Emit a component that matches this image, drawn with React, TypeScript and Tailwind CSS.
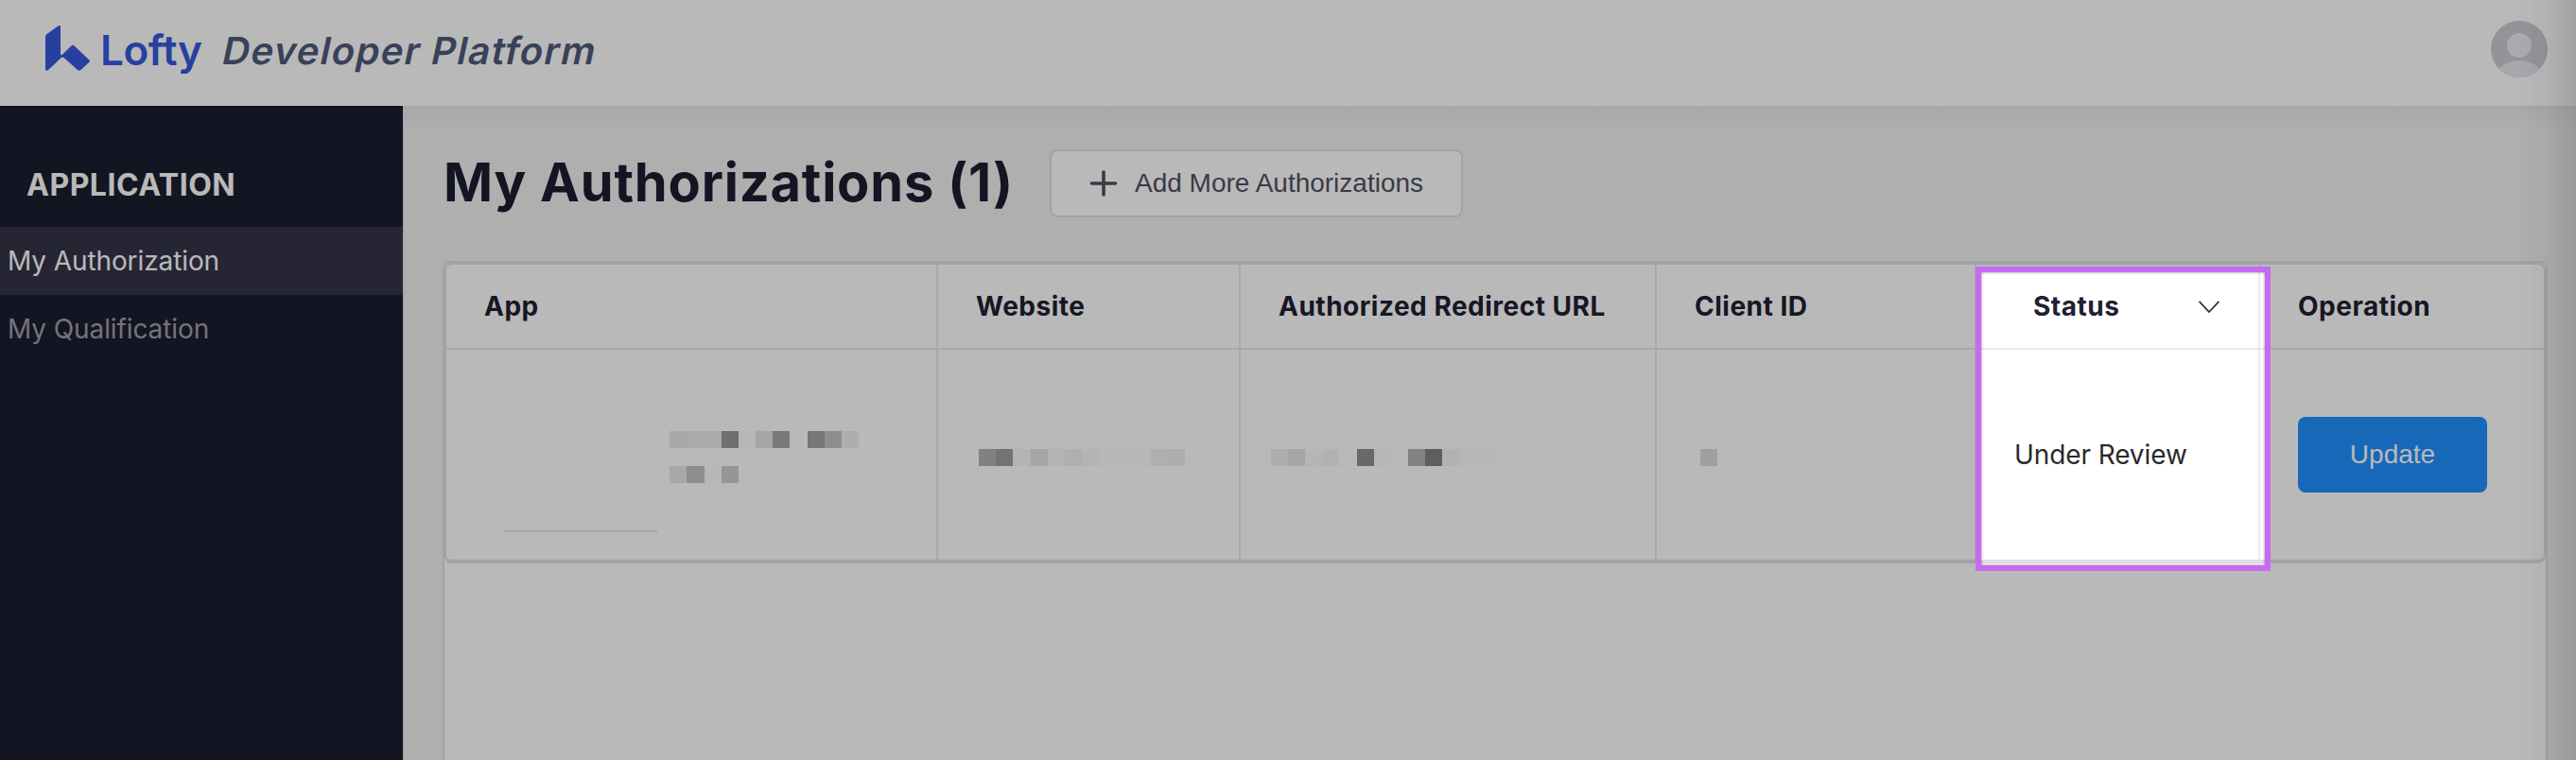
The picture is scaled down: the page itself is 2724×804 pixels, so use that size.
type Pixel = {
  w: number;
  color: string;
};

type NavItem = {
  label: string;
  active: boolean;
};

const NAV_ITEMS: NavItem[] = [
  { label: "My Authorization", active: true },
  { label: "My Qualification", active: false },
];

/**
 * =========================================
 * MASKED VALUES
 * =========================================
 */
const APP_NAME: Pixel[] = [
  { w: 18, color: "#e8e8e8" },
  { w: 37, color: "#ebebeb" },
  { w: 18, color: "#999999" },
  { w: 18, color: "#fdfdfd" },
  { w: 18, color: "#e5e5e5" },
  { w: 18, color: "#a7a7a7" },
  { w: 19, color: "#ffffff" },
  { w: 18, color: "#a5a5a5" },
  { w: 18, color: "#c4c4c4" },
  { w: 18, color: "#f0f0f0" },
];

const APP_NAME_REST: Pixel[] = [
  { w: 18, color: "#e8e8e8" },
  { w: 19, color: "#c4c4c4" },
  { w: 18, color: "#fdfdfd" },
  { w: 18, color: "#cfcfcf" },
];

const WEBSITE: Pixel[] = [
  { w: 18, color: "#b2b2b2" },
  { w: 18, color: "#9f9f9f" },
  { w: 19, color: "#f8f8f8" },
  { w: 18, color: "#e4e4e4" },
  { w: 18, color: "#f8f8f8" },
  { w: 18, color: "#f1f1f1" },
  { w: 18, color: "#f8f8f8" },
  { w: 55, color: "#fdfdfd" },
  { w: 18, color: "#f2f2f2" },
  { w: 18, color: "#efefef" },
];

const REDIRECT_URL: Pixel[] = [
  { w: 18, color: "#efefef" },
  { w: 18, color: "#e4e4e4" },
  { w: 18, color: "#fafafa" },
  { w: 18, color: "#f5f5f5" },
  { w: 19, color: "#fefefe" },
  { w: 18, color: "#919191" },
  { w: 18, color: "#fbfbfb" },
  { w: 18, color: "#fefefe" },
  { w: 18, color: "#b4b4b4" },
  { w: 18, color: "#828282" },
  { w: 19, color: "#f6f6f6" },
  { w: 36, color: "#fdfdfd" },
];

const CLIENT_ID: Pixel[] = [{ w: 18, color: "#dcdcdc" }];

function MaskedText({ pixels }: { pixels: Pixel[] }) {
  return (
    <div className="flex h-[18px]">
      {pixels.map((p, i) => (
        <span
          key={i}
          className="h-full"
          style={{ width: p.w, backgroundColor: p.color }}
        />
      ))}
    </div>
  );
}

function Logo() {
  return (
    <div className="flex items-center whitespace-nowrap">
      <svg width="48" height="52" viewBox="0 0 48 52" className="-mt-[6px]">
        <path
          d="M0 14.5 Q0 13.2 1 12.4 L13.4 3.4 Q16 2 16 4.8 V33.6 L17.4 34.2 L27.4 24.4 Q29 23.2 30.6 24.6 L46.4 39.4 Q47.4 40.6 46.4 41.8 L37.4 50 Q35.6 51.4 34 50 L19.6 37 Q18.2 36 16.8 37 L3.4 49.8 Q0 52 0 49 Z"
          fill="#3759dd"
        />
      </svg>
      <span className="w-[128px] pl-[10px] text-[44px] leading-[56px] font-semibold tracking-[-0.4px] text-[#3759dd]">
        Lofty
      </span>
      <span className="mt-[2px] ml-[12px] inline-block -skew-x-12 text-[40px] leading-[56px] font-semibold tracking-[1.35px] text-[#4f5a7b]">
        Developer Platform
      </span>
    </div>
  );
}

function Avatar() {
  return (
    <svg width="60" height="60" viewBox="0 0 60 60">
      <defs>
        <clipPath id="avatar">
          <circle cx="30" cy="30" r="30" />
        </clipPath>
      </defs>
      <g clipPath="url(#avatar)">
        <rect width="60" height="60" fill="#cbcbd5" />
        <circle cx="30" cy="26" r="13" fill="#ebebf0" />
        <ellipse cx="30" cy="69" rx="30" ry="27" fill="#e6e6ee" />
      </g>
    </svg>
  );
}

export default function App() {
  return (
    <div className="relative flex h-[804px] w-[2724px] flex-col overflow-hidden bg-[#f1f1f1] font-['Inter',sans-serif]">

      {/* =========================================
          HEADER
      ========================================= */}
      <header className="flex h-[112px] shrink-0 items-start justify-between bg-white pr-[30px] pl-[48px]">
        <div className="pt-[24px]">
          <Logo />
        </div>
        <div className="pt-[22px]">
          <Avatar />
        </div>
      </header>

      <div className="flex min-h-0 flex-1">

        {/* =========================================
            SIDEBAR
        ========================================= */}
        <aside className="w-[426px] shrink-0 bg-[#1c1d30]">
          <h2 className="h-[128px] pt-[64px] pl-[28px] text-[32px] leading-[40px] font-bold tracking-[0.5px] text-white">
            APPLICATION
          </h2>
          <nav>
            {NAV_ITEMS.map((item) => (
              <a
                key={item.label}
                className={
                  item.active
                    ? "block h-[72px] bg-[#333348] pl-[8px] text-[28px] leading-[73px] tracking-[-0.1px] text-white"
                    : "block h-[72px] pl-[8px] text-[28px] leading-[73px] tracking-[-0.1px] text-[#a0a0ab]"
                }
              >
                {item.label}
              </a>
            ))}
          </nav>
        </aside>

        {/* =========================================
            CONTENT
        ========================================= */}
        <main className="flex flex-1 flex-col border-l-2 border-[#e6e6e9] bg-linear-to-b from-[#e7e7ea] to-[#f1f1f1] to-[24px] pr-[30px] pl-[40px]">

          <div className="flex h-[164px] items-start pt-[46px]">
            <h1 className="w-[642px] pl-px text-[56px] leading-[70px] font-bold tracking-[0.8px] whitespace-nowrap text-[#1c1d30]">
              My Authorizations (1)
            </h1>
            <button
              type="button"
              className="flex h-[72px] w-[437px] items-center rounded-[8px] border-2 border-[#e0e0e4] bg-white pl-[40px]"
            >
              <svg width="30" height="28" viewBox="0 0 30 28">
                <path
                  d="M15 2 V26 M2.5 14 H27.5"
                  stroke="#51515f"
                  strokeWidth="3.6"
                  strokeLinecap="round"
                />
              </svg>
              <span className="ml-[18px] font-['Liberation_Sans',sans-serif] text-[28px] leading-[40px] whitespace-nowrap text-[#51515f]">
                Add More Authorizations
              </span>
            </button>
          </div>

          {/* =========================================
              TABLE
          ========================================= */}
          <div className="flex-1 rounded-t-[8px] border-2 border-b-0 border-[#dfdfe5] bg-white">
            <div className="rounded-[8px] border-2 border-b-4 border-[#dfdfe7] text-[28px]">

              {/* HEADER */}
              <div className="grid h-[90px] grid-cols-[520px_320px_440px_338px_300px_300px] border-b-2 border-[#e9e9ed] leading-[88px] font-bold tracking-[0.5px] whitespace-nowrap text-[#1f2033]">
                <div className="border-r-2 border-[#e9e9ed] pl-[40px]">App</div>
                <div className="border-r-2 border-[#e9e9ed] pl-[40px]">Website</div>
                <div className="border-r-2 border-[#e9e9ed] pl-[40px]">Authorized Redirect URL</div>
                <div className="border-r-2 border-[#e9e9ed] pl-[40px]">Client ID</div>
                <div className="flex items-center justify-between border-r-2 border-[#e9e9ed] pr-[40px] pl-[60px]">
                  Status
                  <svg
                    width="24"
                    height="14"
                    viewBox="0 0 24 14"
                    fill="none"
                    className="mt-[2px]"
                  >
                    <path
                      d="M2 1.4 L12 12 L22 1.4"
                      stroke="#2b2c3c"
                      strokeWidth="1.7"
                      strokeLinecap="round"
                    />
                  </svg>
                </div>
                <div className="pl-[40px]">Operation</div>
              </div>

              {/* BODY */}
              <div className="grid h-[222px] grid-cols-[520px_320px_440px_338px_300px_300px]">
                <div className="flex border-r-2 border-[#e9e9ed] pt-[30px] pl-[60px]">
                  <div className="h-[163px] w-[164px] rounded-[2px] border-b-2 border-l-2 border-b-[#e6e6ec] border-l-[#fcfcfc]" />
                  <div className="flex flex-col gap-[19px] pt-[56px] pl-[12px]">
                    <MaskedText pixels={APP_NAME} />
                    <MaskedText pixels={APP_NAME_REST} />
                  </div>
                </div>
                <div className="border-r-2 border-[#e9e9ed] pt-[105px] pl-[43px]">
                  <MaskedText pixels={WEBSITE} />
                </div>
                <div className="border-r-2 border-[#e9e9ed] pt-[105px] pl-[32px]">
                  <MaskedText pixels={REDIRECT_URL} />
                </div>
                <div className="border-r-2 border-[#e9e9ed] pt-[105px] pl-[46px]">
                  <MaskedText pixels={CLIENT_ID} />
                </div>
                <div className="border-r-2 border-[#e9e9ed] pt-[91px] pl-[40px] leading-[40px] tracking-[-0.1px] text-[#2a2a2c]">
                  Under Review
                </div>
                <div className="pt-[71px] pl-[40px]">
                  <button
                    type="button"
                    className="h-[80px] w-[200px] rounded-[8px] bg-[#2190ff] font-['Liberation_Sans',sans-serif] text-[28px] text-white"
                  >
                    Update
                  </button>
                </div>
              </div>

            </div>
          </div>
        </main>
      </div>

      {/* =========================================
          SPOTLIGHT
      ========================================= */}
      <div className="absolute top-0 right-0 h-full w-[60px] bg-linear-to-r from-transparent via-black/4 to-black/12" />
      <div className="absolute top-[282px] left-[2089px] h-[322px] w-[312px] border-6 border-[#c66bf3] shadow-[0_0_0_3000px_rgba(0,0,0,0.275),inset_0_0_3px_rgba(0,0,0,0.5)]" />
    </div>
  );
}
